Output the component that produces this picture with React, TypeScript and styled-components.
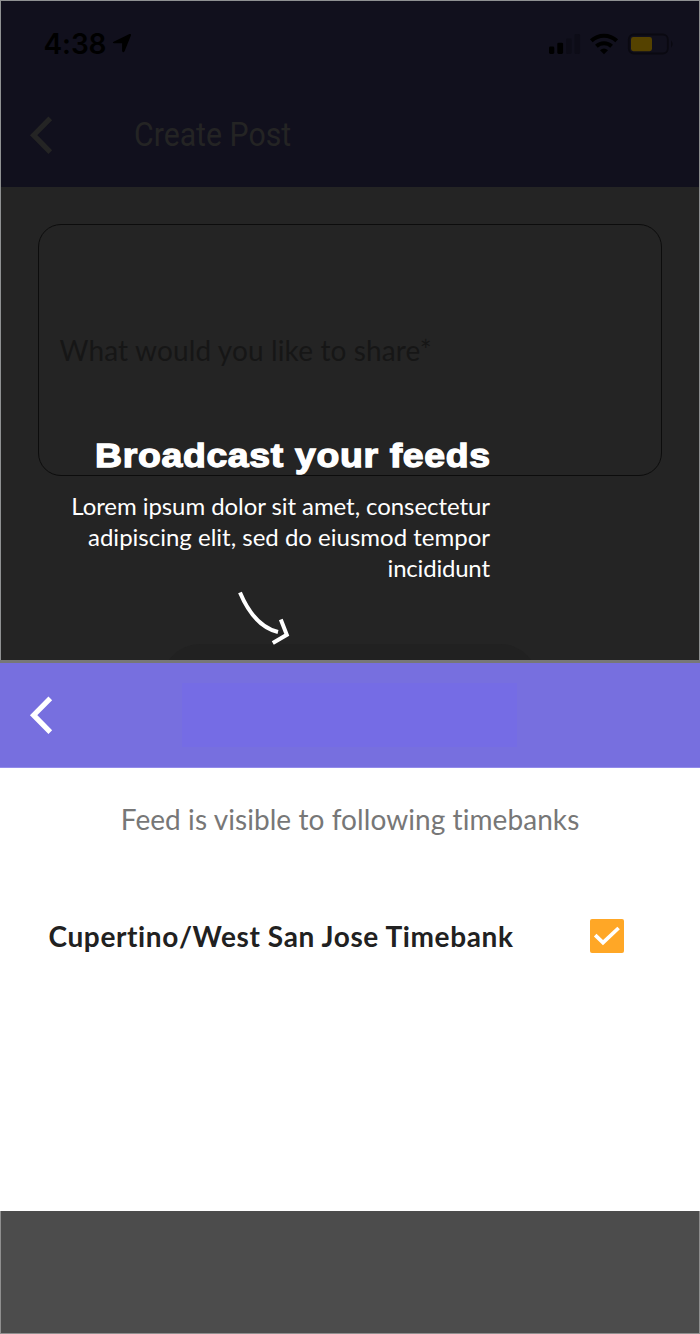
import React from "react";
import styled, { createGlobalStyle } from "styled-components";

const GlobalStyle = createGlobalStyle`
  * { box-sizing: border-box; }
  body { margin: 0; background: #fff; }
`;

const Page = styled.main`
  position: relative;
  width: 700px;
  height: 1334px;
  display: flex;
  flex-direction: column;
  overflow: hidden;
  font-family: Lato, "Open Sans", sans-serif;
`;

const ComposeScreen = styled.section`
  flex: none;
  height: 660px;
  display: flex;
  flex-direction: column;
  background: #242424;
  border: 1px solid #8f9192;
  border-bottom: 0;
  overflow: hidden;
`;

const DarkHeader = styled.header`
  flex: none;
  height: 186px;
  background: #11101d;
`;

const StatusBar = styled.div`
  height: 86px;
  padding: 0 25px 0 42.5px;
  display: flex;
  align-items: center;
  justify-content: space-between;
`;

const Clock = styled.div`
  display: flex;
  align-items: center;
  gap: 6px;
  color: #000;
  font: 600 28px/34px Inter, sans-serif;
  letter-spacing: -0.1px;

  svg {
    margin-top: -2px;
  }
`;

const TitleBar = styled.div`
  height: 96px;
  padding-left: 28px;
  display: flex;
  align-items: center;
`;

const ScreenTitle = styled.h1`
  margin: 0 0 0 81px;
  color: #242424;
  font: 400 32.5px/40px Roboto, sans-serif;
  transform: scaleX(0.93);
  transform-origin: left center;
`;

const Composer = styled.div`
  flex: none;
  height: 252px;
  margin: 37px 37px 0 36.5px;
  padding: 0 0 0 21px;
  display: flex;
  align-items: center;
  border: 1.5px solid #0c0c0c;
  border-radius: 23px;
`;

const Line = styled.span<{ $size: number; $spacing: number; $color: string; $weight?: number }>`
  font-size: ${(p) => p.$size}px;
  letter-spacing: ${(p) => p.$spacing}px;
  margin-right: ${(p) => -p.$spacing}px;
  color: ${(p) => p.$color};
  font-weight: ${(p) => p.$weight ?? 400};
  white-space: nowrap;
`;

const PostButton = styled.div`
  flex: none;
  width: 376px;
  height: 80px;
  margin: 168px auto 0;
  border-radius: 38px;
  background: #212121;
`;

const Coachmark = styled.aside`
  position: absolute;
  top: 434px;
  left: 60px;
  width: 430px;
  display: flex;
  flex-direction: column;
  align-items: flex-end;
  color: #fff;
`;

const CoachTitle = styled.h2`
  margin: 0 -0.5px 14px 0;
  font: 700 34px/42px "Liberation Sans", sans-serif;
  letter-spacing: 0.6px;
  -webkit-text-stroke: 1.3px #fff;
  white-space: nowrap;
  transform: scaleX(1.1);
  transform-origin: right center;
`;

const CoachText = styled.p`
  margin: 0;
  display: flex;
  flex-direction: column;
  align-items: flex-end;
  line-height: 31px;
`;

const CoachArrow = styled.svg`
  margin: 7px 198px 0 0;
`;

const Divider = styled.div`
  flex: none;
  height: 3px;
  background: #777;
`;

const SheetHeader = styled.header`
  flex: none;
  height: 105px;
  padding-left: 29px;
  display: flex;
  align-items: center;
  background: #776fdf;
  border-bottom: 1px solid #928bea;
`;

const TitlePlate = styled.div`
  width: 335px;
  height: 64px;
  margin-left: 129px;
  background: #756ce5;
`;

const SheetBody = styled.section`
  flex: none;
  height: 443px;
  padding-top: 33px;
  display: flex;
  flex-direction: column;
  background: #fff;
`;

const Caption = styled.p`
  margin: 0;
  display: flex;
  justify-content: center;
  line-height: 36px;
`;

const OptionRow = styled.label`
  margin-top: 82px;
  padding: 0 76.5px 0 48.5px;
  height: 34px;
  display: flex;
  align-items: center;
  justify-content: space-between;
`;

const Checkbox = styled.span`
  width: 34px;
  height: 34px;
  display: grid;
  place-items: center;
  border-radius: 2px;
  background: #ffa726;
`;

const Footer = styled.footer`
  flex: 1;
  background: #4c4c4c;
  border: 1px solid #8f8f8f;
  border-top: 0;
`;

const BackIcon = ({ color }: { color: string }) => (
  <svg width="24" height="38" viewBox="0 0 24 38" fill="none">
    <path d="M21.3 2.4 4.6 19.2l16.7 16.9" stroke={color} strokeWidth="5.2" />
  </svg>
);

const LocationIcon = () => (
  <svg width="20" height="20" viewBox="0 0 20 20">
    <path d="M1.6 8.7 17.5 1.1q2-.6 1.4 1.3L12.6 18.2q-1.6 2.2-2.5-.2V10.2H2.2q-2.4-.4-.6-1.5Z" fill="#000" />
  </svg>
);

const StatusIcons = () => (
  <svg width="126" height="24" viewBox="548 31 126 24">
    <rect x="549" y="45.5" width="5.3" height="7.5" rx="1.4" />
    <rect x="557.3" y="41.7" width="5.8" height="11.3" rx="1.4" />
    <rect x="566" y="37.5" width="5.6" height="15.5" rx="1.4" fill="#0d0c17" />
    <rect x="574.5" y="33" width="5.6" height="20" rx="1.4" fill="#0d0c17" />
    <g fill="none" stroke="#000" strokeWidth="4">
      <path d="M591.3 39.8a18.5 18.5 0 0 1 25.4 0" />
      <path d="M596.4 45.2a11.2 11.2 0 0 1 15.2 0" />
    </g>
    <path d="M600 49.2q4-3.4 8 0l-4 4Z" />
    <rect x="628.8" y="33.5" width="39" height="19" rx="5" fill="none" stroke="#0a0911" strokeWidth="1.8" />
    <rect x="631" y="36" width="21" height="14.2" rx="2.4" fill="#554200" />
    <path d="M671 39.5q3.4 3.5 0 7Z" fill="#0a0911" />
  </svg>
);

export default function App() {
  return (
    <Page>
      <GlobalStyle />
      <ComposeScreen>
        <DarkHeader>
          <StatusBar>
            <Clock>
              4:38
              <LocationIcon />
            </Clock>
            <StatusIcons />
          </StatusBar>
          <TitleBar>
            <BackIcon color="#242424" />
            <ScreenTitle>Create Post</ScreenTitle>
          </TitleBar>
        </DarkHeader>
        <Composer>
          <Line $size={28} $spacing={0.13} $color="#161616">What would you like to share*</Line>
        </Composer>
        <PostButton />
      </ComposeScreen>
      <Divider />
      <SheetHeader>
        <BackIcon color="#fff" />
        <TitlePlate />
      </SheetHeader>
      <SheetBody>
        <Caption>
          <Line $size={28} $spacing={0.07} $color="#777">Feed is visible to following timebanks</Line>
        </Caption>
        <OptionRow>
          <Line $size={28} $spacing={0.62} $color="#212121" $weight={700}>Cupertino/West San Jose Timebank</Line>
          <Checkbox>
            <svg width="28" height="22" viewBox="0 0 28 22" fill="none">
              <path d="m2.2 10.2 7.8 7.5L25.6 3" stroke="#fff" strokeWidth="3.7" />
            </svg>
          </Checkbox>
        </OptionRow>
      </SheetBody>
      <Footer />
      <Coachmark>
        <CoachTitle>Broadcast your feeds</CoachTitle>
        <CoachText>
          <Line $size={24} $spacing={-0.07} $color="#fff">Lorem ipsum dolor sit amet, consectetur</Line>
          <Line $size={24} $spacing={0} $color="#fff">adipiscing elit, sed do eiusmod tempor</Line>
          <Line $size={24} $spacing={-0.2} $color="#fff">incididunt</Line>
        </CoachText>
        <CoachArrow width="56" height="56" viewBox="236 590 56 56" fill="none" stroke="#fff" strokeWidth="4">
          <path d="M240 592.6q14 33.4 38 39.4" />
          <path d="m280.8 619.6 6 15.2-14 8.2" />
        </CoachArrow>
      </Coachmark>
    </Page>
  );
}
